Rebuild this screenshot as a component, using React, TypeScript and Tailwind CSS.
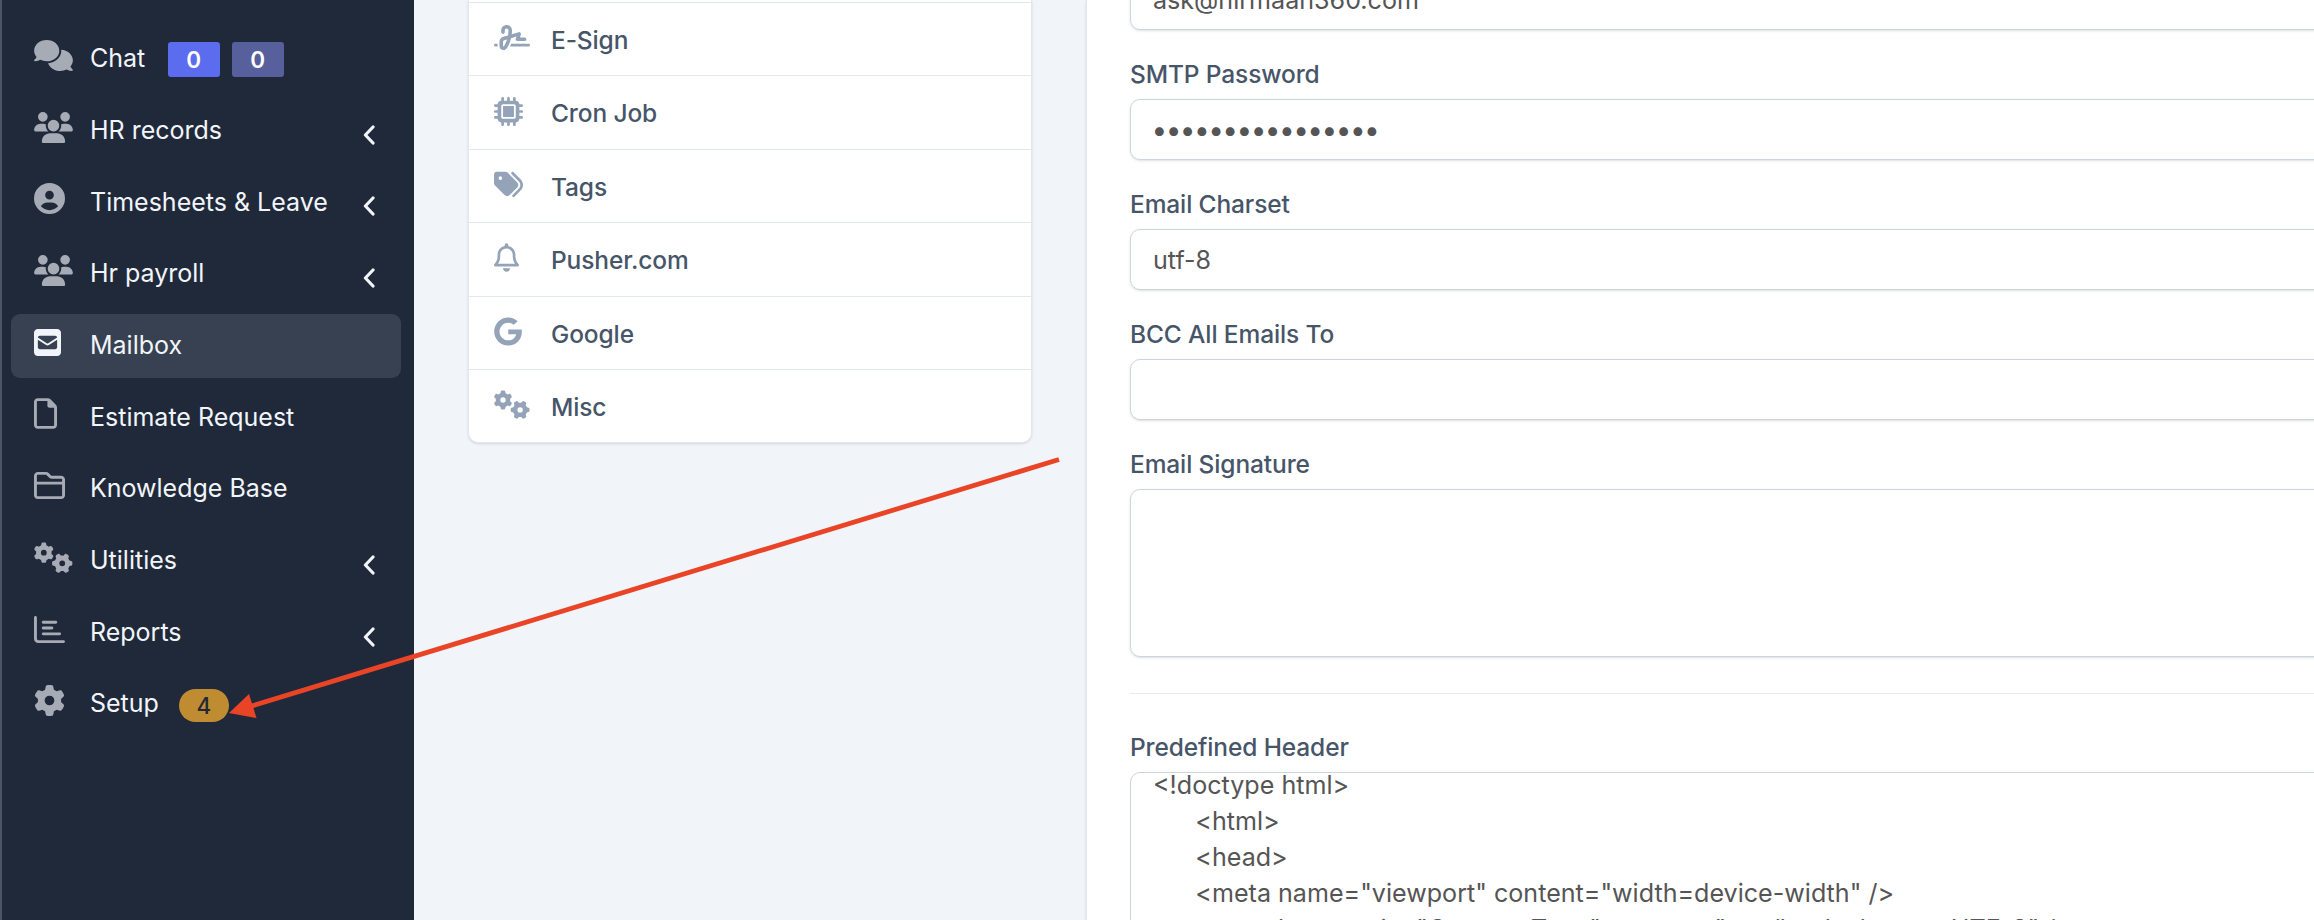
import type { ComponentType, ReactNode } from "react";
import {
  FaComments,
  FaUsers,
  FaCircleUser,
  FaSquareEnvelope,
  FaRegFile,
  FaRegFolderClosed,
  FaGears,
  FaRegChartBar,
  FaGear,
  FaSignature,
  FaMicrochip,
  FaTags,
  FaRegBell,
  FaGoogle,
} from "react-icons/fa6";

type Icon = ComponentType<{ className?: string }>;

type NavItem = {
  label: string;
  icon: Icon;
  size: string;
  expandable?: boolean;
  active?: boolean;
  badges?: ReactNode;
};

const navItems: NavItem[] = [
  {
    label: "Chat",
    icon: FaComments,
    size: "h-[31px] w-[39px]",
    badges: (
      <div className="mt-[1px] ml-[23px] flex gap-3 text-[22.5px] font-semibold text-white">
        <span className="flex h-[35px] w-[52px] items-center justify-center rounded-[3px] bg-[#5b6cee] pt-[1px] pr-[1px]">0</span>
        <span className="flex h-[35px] w-[52px] items-center justify-center rounded-[3px] bg-[#575f9d] pt-[1px] pr-[1px]">0</span>
      </div>
    ),
  },
  { label: "HR records", icon: FaUsers, size: "h-[31px] w-[39px]", expandable: true },
  { label: "Timesheets & Leave", icon: FaCircleUser, size: "h-[31px] w-[31px]", expandable: true },
  { label: "Hr payroll", icon: FaUsers, size: "h-[31px] w-[39px]", expandable: true },
  { label: "Mailbox", icon: FaSquareEnvelope, size: "h-[31px] w-[27px]", active: true },
  { label: "Estimate Request", icon: FaRegFile, size: "h-[31px] w-[23px]" },
  { label: "Knowledge Base", icon: FaRegFolderClosed, size: "h-[31px] w-[31px]" },
  { label: "Utilities", icon: FaGears, size: "h-[31px] w-[39px]", expandable: true },
  { label: "Reports", icon: FaRegChartBar, size: "h-[31px] w-[31px]", expandable: true },
  {
    label: "Setup",
    icon: FaGear,
    size: "h-[31px] w-[31px]",
    badges: (
      <span className="mt-[3px] ml-[20px] flex h-[33px] w-[50px] items-center justify-center rounded-full bg-[#c08c32] pt-[1px] text-[22.5px] font-medium text-[#1f2937]">
        4
      </span>
    ),
  },
];

const settings: { label: string; icon: Icon; size: string }[] = [
  { label: "E-Sign", icon: FaSignature, size: "h-[29px] w-[36px]" },
  { label: "Cron Job", icon: FaMicrochip, size: "h-[29px] w-[29px]" },
  { label: "Tags", icon: FaTags, size: "h-[29px] w-[29px]" },
  { label: "Pusher.com", icon: FaRegBell, size: "h-[29px] w-[25px]" },
  { label: "Google", icon: FaGoogle, size: "h-[29px] w-[28px]" },
  { label: "Misc", icon: FaGears, size: "h-[29px] w-[36px]" },
];

const headerTemplate = `<!doctype html>
      <html>
      <head>
      <meta name="viewport" content="width=device-width" />
      <meta http-equiv="Content-Type" content="text/html; charset=UTF-8" />`;

function Chevron() {
  return (
    <svg viewBox="0 0 12 20" className="mt-[8px] mr-[26px] ml-auto h-5 w-3" fill="none">
      <path d="M10 2 L2.4 10 L10 18" stroke="#f1f5f9" strokeWidth="3.2" strokeLinecap="round" strokeLinejoin="round" />
    </svg>
  );
}

function Sidebar() {
  return (
    <aside className="h-full w-[414px] shrink-0 border-l-2 border-[#4b5563] bg-[#202939] pt-[27px] pr-[13px] pl-[9px]">
      <nav className="flex flex-col gap-[7.7px]">
        {navItems.map(({ label, icon: ItemIcon, size, expandable, active, badges }) => (
          <div
            key={label}
            className={`flex h-16 items-center rounded-[9px] pl-[23px] text-[25px] text-[#f1f5f9] ${
              active ? "bg-[#374152]" : ""
            }`}
          >
            <div className={`mb-[7px] w-[56px] shrink-0 ${active ? "text-[#f1f5f9]" : "text-[#a7abb5]"}`}>
              <ItemIcon className={size} />
            </div>
            <span className="whitespace-nowrap">{label}</span>
            {badges}
            {expandable && <Chevron />}
          </div>
        ))}
      </nav>
    </aside>
  );
}

function SettingsMenu() {
  return (
    <div className="h-[443px] w-[564px] shrink-0 overflow-hidden rounded-b-[10px] border border-t-0 border-[#e2e8f0] bg-white pt-[2px] shadow-sm">
      {settings.map(({ label, icon: ItemIcon, size }) => (
        <div
          key={label}
          className="flex h-[73.4px] items-center border-t border-[#e2e8f0] pl-[25px] text-[24.5px] font-medium tracking-[-0.12px] text-[#475569]"
        >
          <div className="mb-[3px] w-[57px] text-[#94a3b8]">
            <ItemIcon className={size} />
          </div>
          <span className="mt-[2.5px]">{label}</span>
        </div>
      ))}
    </div>
  );
}

function Label({ children }: { children: ReactNode }) {
  return (
    <div className="pt-[1px] text-[24.5px] leading-[35px] font-medium tracking-[-0.12px] text-[#475569]">{children}</div>
  );
}

function Field({ label, children }: { label: string; children?: ReactNode }) {
  return (
    <div className="pt-[26px]">
      <Label>{label}</Label>
      <div className="mt-[7px] flex h-[61px] items-center rounded-[10px] border border-[#cbd5e1] pl-[22px] shadow-sm">
        {children}
      </div>
    </div>
  );
}

function EmailForm() {
  return (
    <main className="h-full w-[1300px] shrink-0 border-l border-[#e2e8f0] bg-white pl-[43px] text-[25.1px] text-[#555555] shadow-sm">
      <div className="-mt-[31px] flex h-[61px] items-center rounded-[10px] border border-[#cbd5e1] pl-[22px] shadow-sm">
        <span className="pt-[2px]">ask@nirmaan360.com</span>
      </div>
      <Field label="SMTP Password">
        <span className="-ml-[1.5px] text-[28px] tracking-[-1.58px]">••••••••••••••••</span>
      </Field>
      <Field label="Email Charset">
        <span className="pt-[2px]">utf-8</span>
      </Field>
      <Field label="BCC All Emails To" />
      <div className="pt-[26px]">
        <Label>Email Signature</Label>
        <div className="mt-[7px] h-[168px] rounded-[10px] border border-[#cbd5e1] shadow-sm" />
      </div>
      <hr className="mt-9 border-[#e9ebee]" />
      <div className="pt-[35px]">
        <Label>Predefined Header</Label>
        <div className="mt-[7px] h-[200px] overflow-hidden rounded-[10px] border border-[#cbd5e1] pl-[22px]">
          <pre className="-mt-[6px] font-[Inter,sans-serif] text-[25.1px] leading-[36px]">{headerTemplate}</pre>
        </div>
      </div>
    </main>
  );
}

function Arrow() {
  return (
    <svg className="pointer-events-none absolute inset-0 h-[920px] w-[2314px]" viewBox="0 0 2314 920">
      <line x1="1059" y1="459.5" x2="250" y2="706.5" stroke="#ea4427" strokeWidth="4.8" />
      <polygon points="229,713 249,694 256.5,718" fill="#ea4427" />
    </svg>
  );
}

export default function App() {
  return (
    <div className="relative flex h-[920px] w-[2314px] overflow-hidden bg-[#f1f5fa] font-[Inter,sans-serif]">
      <Sidebar />
      <div className="flex min-w-0 flex-1 gap-[54px] overflow-hidden pl-[54px]">
        <SettingsMenu />
        <EmailForm />
      </div>
      <Arrow />
    </div>
  );
}
